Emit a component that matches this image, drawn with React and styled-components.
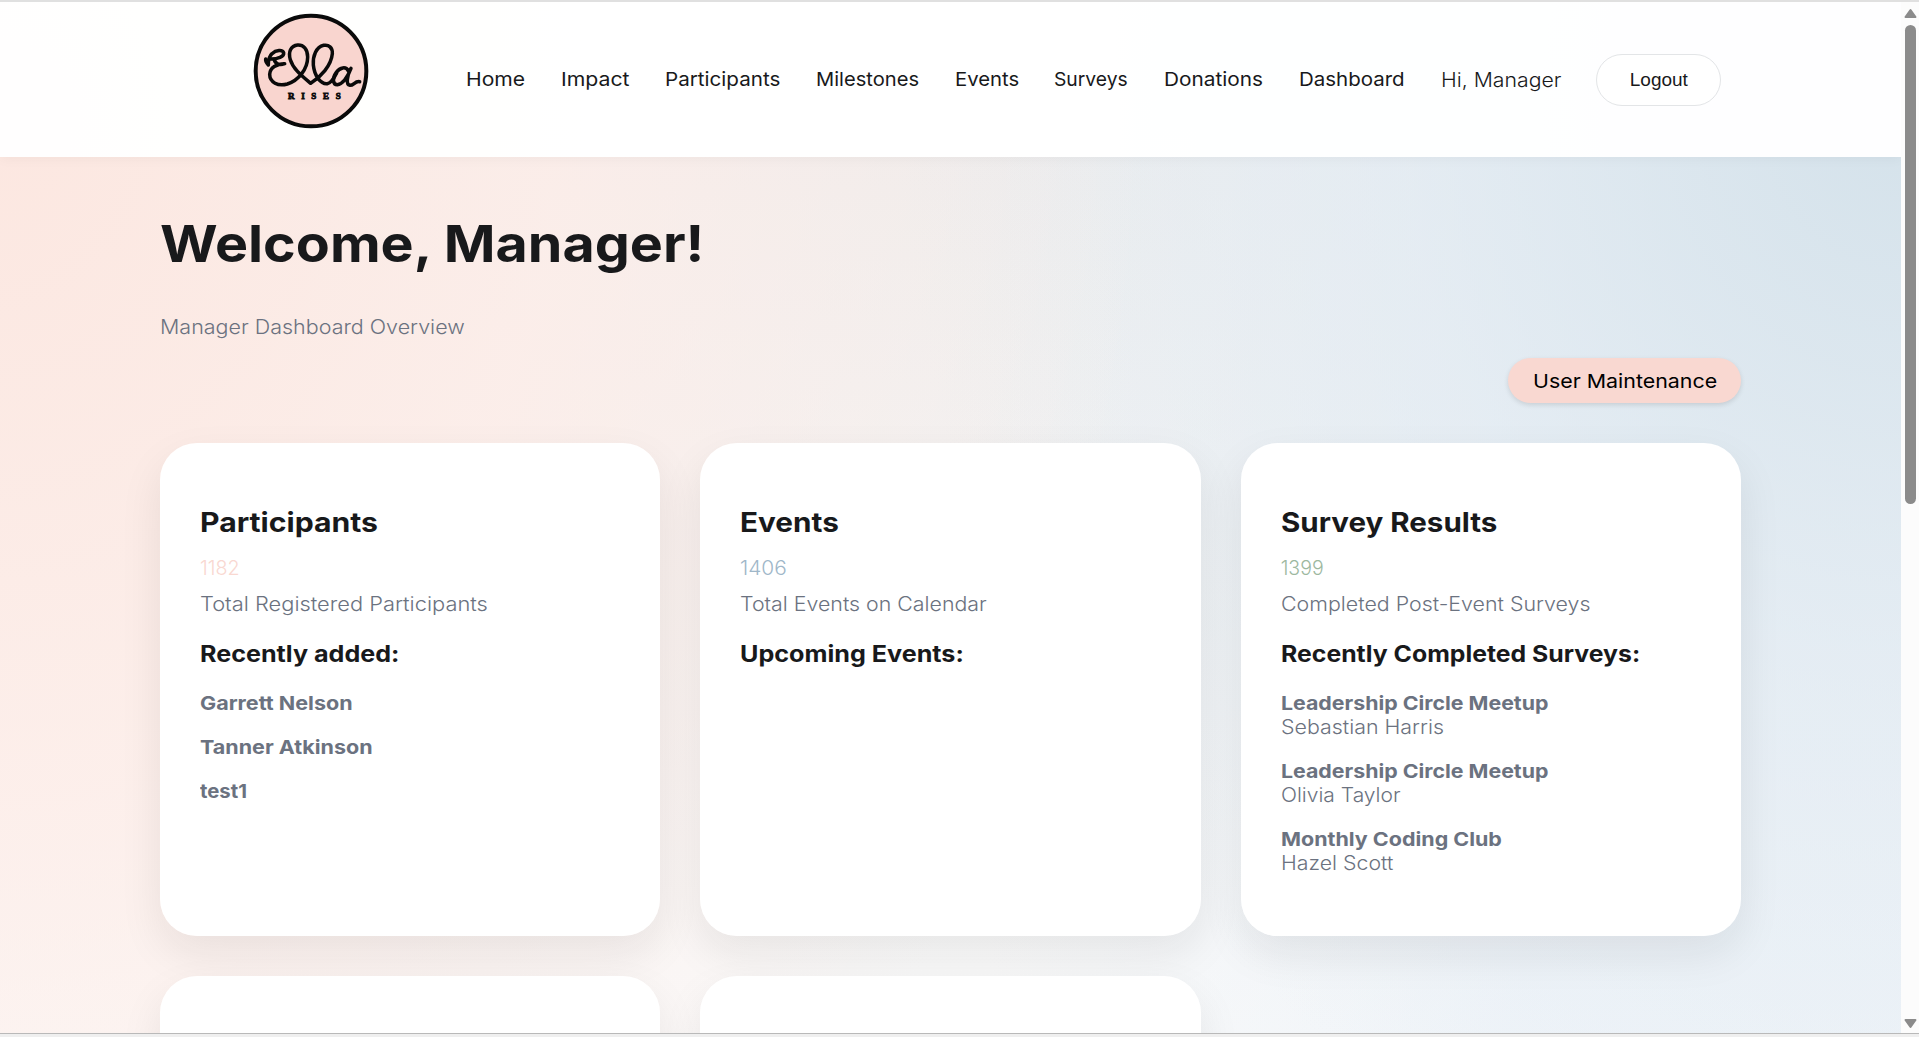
import React from "react";
import styled, { createGlobalStyle, css } from "styled-components";

const GlobalStyle = createGlobalStyle`
  * { box-sizing: border-box; }
  body {
    margin: 0;
    overflow: hidden;
    font-family: Inter, "Noto Sans", sans-serif;
    color: #18191b;
  }
  h1, h2, h3, p, ul { margin: 0; padding: 0; }
`;

const wide = css`
  transform: scaleX(${(p) => p.$wide || 1});
  transform-origin: 0 50%;
  white-space: nowrap;
`;

const Window = styled.div`
  display: flex;
  flex-direction: column;
  height: 1037px;
  border-top: 2px solid #e0e0e0;
  background: #efefef;
`;

const Viewport = styled.div`
  display: flex;
  height: 1031px;
  overflow: hidden;
`;

const Page = styled.div`
  flex: 1;
  height: 1031px;
  overflow: hidden;
  background:
    radial-gradient(ellipse 1150px 1400px at 0 130px, rgba(253, 231, 224, 0.95), rgba(254, 237, 232, 0.8) 48%, rgba(255, 240, 236, 0) 100%),
    radial-gradient(ellipse 1000px 1150px at 100% 100px, rgba(211, 225, 234, 0.95), rgba(223, 233, 241, 0.6) 50%, rgba(238, 243, 248, 0) 100%),
    linear-gradient(90deg, rgba(255, 255, 255, 0) 52%, rgba(236, 242, 248, 0.8) 80%),
    linear-gradient(180deg, #ececec 12%, #fafafa 100%);
`;

const BottomEdge = styled.div`
  height: 4px;
  border-top: 1px solid #b9b9b9;
`;

const Header = styled.header`
  display: flex;
  align-items: flex-start;
  height: 155px;
  padding-left: 253px;
  background: rgba(255, 255, 255, 0.96);
  box-shadow: 0 2px 12px rgba(0, 0, 0, 0.04);
`;

const Logo = styled.svg`
  flex: none;
  width: 116px;
  height: 116px;
  margin-top: 10.5px;
`;

const Nav = styled.nav`
  display: flex;
  align-items: center;
  gap: 35px;
  height: 52px;
  margin: 52px 0 0 97px;
`;

const NavLink = styled.a`
  flex: none;
  width: ${(p) => p.$width}px;
  font-size: 19px;
  font-weight: 430;
  line-height: 24px;
  ${wide}
`;

const Greeting = styled.span`
  flex: none;
  width: 120.5px;
  font-size: 19.5px;
  font-weight: 300;
  line-height: 24px;
  ${wide}
`;

const LogoutButton = styled.button`
  flex: none;
  width: 125px;
  height: 52px;
  padding: 0;
  border: 1px solid #e3e5e7;
  border-radius: 26px;
  background: #fff;
  color: #18191b;
  font: 19px "Liberation Sans", Arial, sans-serif;
`;

const Main = styled.main`
  width: 1581px;
  margin-left: 160px;
  padding-top: 57px;
`;

const Title = styled.h1`
  font-size: 51px;
  font-weight: 700;
  line-height: 60px;
  ${wide}
`;

const Text = styled.p`
  color: ${(p) => p.$color || "#6b7280"};
  font-size: 19.5px;
  font-weight: 300;
  line-height: 24px;
  ${wide}
`;

const Subtitle = styled(Text)`
  margin-top: 41px;
`;

const Actions = styled.div`
  display: flex;
  justify-content: flex-end;
  margin: 19px 0 39.5px;
`;

const MaintenanceButton = styled.button`
  width: 233px;
  height: 45px;
  padding: 0 0 0 24.5px;
  border: 0;
  border-radius: 23px;
  background: #f9d8d1;
  box-shadow: 0 2px 5px rgba(0, 0, 0, 0.12);
  color: #000;
  font-family: inherit;
  font-size: 19.2px;
  font-weight: 430;
  text-align: left;
`;

const ButtonLabel = styled.span`
  display: inline-block;
  ${wide}
`;

const Cards = styled.section`
  display: grid;
  grid-template-columns: repeat(3, minmax(0, 1fr));
  grid-auto-rows: 493px;
  gap: 40px;
`;

const Card = styled.article`
  padding: 63px 40px 40px;
  border-radius: 37px;
  background: rgba(255, 255, 255, 0.98);
  box-shadow: 0 18px 44px rgba(20, 22, 26, 0.08);
`;

const CardTitle = styled.h2`
  margin-bottom: 16px;
  font-size: 27px;
  font-weight: 680;
  line-height: 34px;
  ${wide}
`;

const Count = styled(Text)`
  margin-bottom: 12px;
`;

const SectionTitle = styled.h3`
  margin: 24px 0 23.5px;
  font-size: 22.5px;
  font-weight: 680;
  line-height: 28px;
  ${wide}
`;

const List = styled.ul`
  display: flex;
  flex-direction: column;
  gap: 20px;
  list-style: none;
`;

const Name = styled.strong`
  display: block;
  color: #6b7280;
  font-size: 19.2px;
  font-weight: 680;
  line-height: 24px;
  ${wide}
`;

const ScrollTrack = styled.div`
  display: flex;
  flex-direction: column;
  align-items: center;
  width: 18px;
  padding: 6px 0 4px 1px;
  background: #fcfcfc;
`;

const Arrow = styled.svg`
  flex: none;
  width: 13px;
  height: 10px;
  fill: #8b8b8b;
  stroke: #8b8b8b;
  stroke-width: 2;
  stroke-linejoin: round;
`;

const Thumb = styled.div`
  width: 11px;
  height: 479px;
  margin: 7px 0 auto;
  border-radius: 6px;
  background: #8b8b8b;
`;

const links = [
  ["Home", 59.7, 1.11],
  ["Impact", 69.2, 1.118],
  ["Participants", 116, 1.085],
  ["Milestones", 104, 1.06],
  ["Events", 64.6, 1.068],
  ["Surveys", 74.7, 1.015],
  ["Donations", 100, 1.095],
  ["Dashboard", 106.7, 1.078],
];

const cards = [
  {
    title: ["Participants", 1.117],
    count: ["1182", 1.01, "#f9d8d1"],
    label: ["Total Registered Participants", 1.12],
    section: ["Recently added:", 1.117],
    items: [
      [["Garrett Nelson", 1.123]],
      [["Tanner Atkinson", 1.122]],
      [["test1", 1.06]],
    ],
  },
  {
    title: ["Events", 1.1],
    count: ["1406", 1.07, "#9fb7c9"],
    label: ["Total Events on Calendar", 1.095],
    section: ["Upcoming Events:", 1.118],
    items: [],
  },
  {
    title: ["Survey Results", 1.094],
    count: ["1399", 1, "#9db89f"],
    label: ["Completed Post-Event Surveys", 1.097],
    section: ["Recently Completed Surveys:", 1.103],
    items: [
      [["Leadership Circle Meetup", 1.112], ["Sebastian Harris", 1.097]],
      [["Leadership Circle Meetup", 1.112], ["Olivia Taylor", 1.078]],
      [["Monthly Coding Club", 1.119], ["Hazel Scott", 1.093]],
    ],
  },
];

function EllaLogo() {
  return (
    <Logo viewBox="-21 -76 348 348">
      <circle cx="153" cy="98" r="166" fill="#f9d5cf" stroke="#0a0a0a" strokeWidth="12" />
      <g fill="none" stroke="#0a0a0a" strokeWidth="10.5" strokeLinecap="round" strokeLinejoin="round">
        <path d="M17 62 C16 70 20 75 25 80 C25 66 27 54 36 46 C48 34 68 33 71 43 C73 55 52 62 34 62 M42 62 C46 78 60 82 74 76 C50 76 30 88 29 108 C29 132 54 145 82 137 C116 126 143 92 143 56 C143 32 130 19 113 20 C92 22 84 42 91 64 C100 94 130 116 152 135 C182 116 214 82 217 46 C218 28 206 18 191 21 C168 26 158 54 160 80 C163 112 182 138 202 136 C214 134 222 120 230 104" />
        <path d="M265 98 C258 83 240 87 229 102 C216 120 218 139 232 139 C250 137 264 112 273 90 C262 112 256 138 270 141 C282 141 284 128 299 130" />
      </g>
      <text x="84" y="181" fill="#0a0a0a" stroke="#0a0a0a" strokeWidth="2.4" fontFamily="Liberation Serif, serif" fontWeight="700" fontSize="27" textLength="158">
        RISES
      </text>
    </Logo>
  );
}

function SummaryCard({ title, count, label, section, items }) {
  return (
    <Card>
      <CardTitle $wide={title[1]}>{title[0]}</CardTitle>
      <Count $wide={count[1]} $color={count[2]}>{count[0]}</Count>
      <Text $wide={label[1]}>{label[0]}</Text>
      <SectionTitle $wide={section[1]}>{section[0]}</SectionTitle>
      <List>
        {items.map(([name, person], i) => (
          <li key={i}>
            <Name $wide={name[1]}>{name[0]}</Name>
            {person && <Text $wide={person[1]}>{person[0]}</Text>}
          </li>
        ))}
      </List>
    </Card>
  );
}

export default function App() {
  return (
    <Window>
      <GlobalStyle />
      <Viewport>
        <Page>
          <Header>
            <EllaLogo />
            <Nav>
              {links.map(([label, width, stretch]) => (
                <NavLink key={label} $width={width} $wide={stretch}>{label}</NavLink>
              ))}
              <Greeting $wide={1.09}>Hi, Manager</Greeting>
              <LogoutButton>Logout</LogoutButton>
            </Nav>
          </Header>
          <Main>
            <Title $wide={1.09}>Welcome, Manager!</Title>
            <Subtitle $wide={1.102}>Manager Dashboard Overview</Subtitle>
            <Actions>
              <MaintenanceButton>
                <ButtonLabel $wide={1.115}>User Maintenance</ButtonLabel>
              </MaintenanceButton>
            </Actions>
            <Cards>
              {cards.map((card) => (
                <SummaryCard key={card.title[0]} {...card} />
              ))}
              <Card />
              <Card />
            </Cards>
          </Main>
        </Page>
        <ScrollTrack>
          <Arrow viewBox="0 0 13 10"><path d="M6.5 2 L11.5 9 H1.5 Z" /></Arrow>
          <Thumb />
          <Arrow viewBox="0 0 13 10"><path d="M6.5 8 L11.5 1 H1.5 Z" /></Arrow>
        </ScrollTrack>
      </Viewport>
      <BottomEdge />
    </Window>
  );
}
